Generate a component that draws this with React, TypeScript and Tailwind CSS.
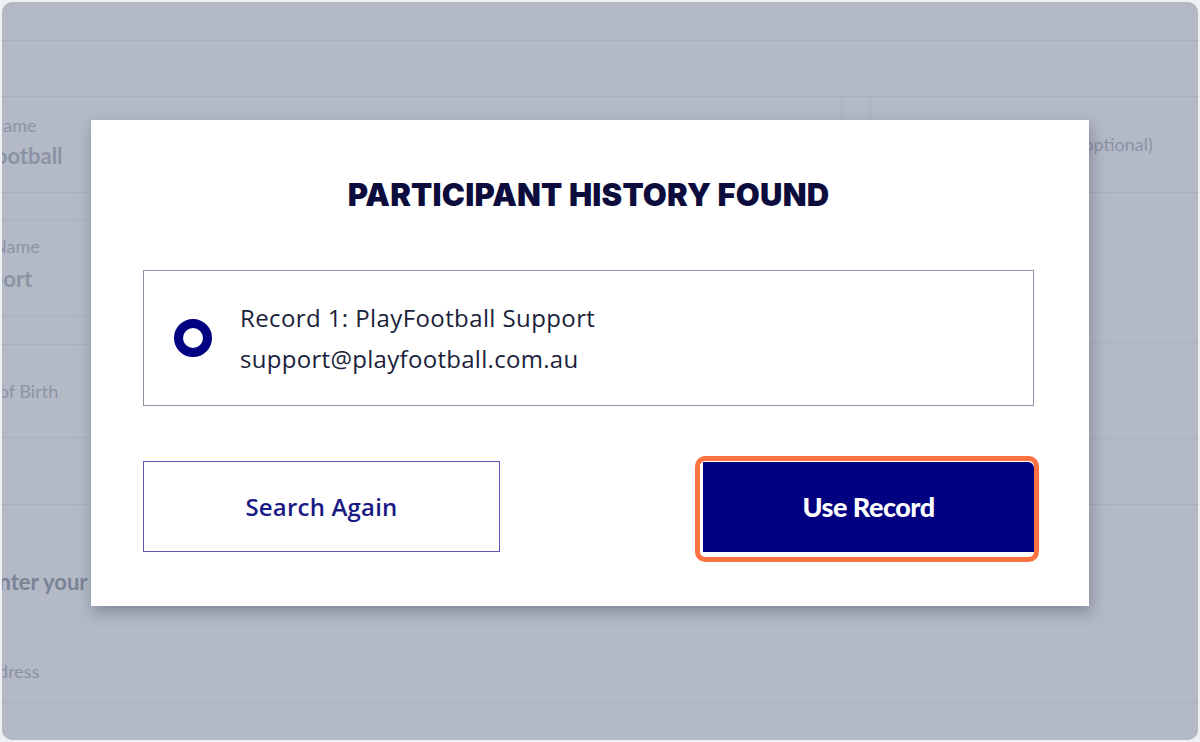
import React from 'react';

/**
 * Background form (dimmed behind the modal)
 */
function BackgroundForm() {
    return (
        <div className="flex flex-col text-[#8c93a5]">
            {/* Header strip */}
            <div className="h-[39px] border-b border-[#a9afbc]" />
            <div className="h-[56px] border-b border-[#a9afbc]" />

            <div className="flex">
                {/* Left column */}
                <div className="w-[892px] shrink-0 flex flex-col -ml-[52px]">
                    <div className="h-[96px] border-b border-r border-[#a9afbc] pt-[16px]">
                        <div className="text-[18px] leading-[24px]">First Name</div>
                        <div className="text-[22px] leading-[30px] font-bold mt-[4px] -ml-[8px]">PlayFootball</div>
                    </div>
                    <div className="h-[27px] border-b border-[#a9afbc]" />
                    <div className="h-[97px] border-b border-r border-[#a9afbc] pt-[14px]">
                        <div className="text-[18px] leading-[24px] pl-[6px]">Last Name</div>
                        <div className="text-[22px] leading-[30px] font-bold mt-[6px] pl-[4px]">Support</div>
                    </div>
                    <div className="h-[28px] border-b border-[#a9afbc]" />
                    <div className="h-[93px] border-b border-r border-[#a9afbc] flex items-center pl-[6px]">
                        <div className="text-[18px]">Date of Birth</div>
                    </div>
                </div>
                <div className="w-[28px] shrink-0" />
                {/* Right column */}
                <div className="flex-1 flex flex-col">
                    <div className="h-[96px] border-b border-l border-[#a9afbc] flex items-center pl-[78px]">
                        <div className="text-[18px] whitespace-nowrap">Preferred Name (optional)</div>
                    </div>
                    <div className="h-[150px] border-b border-[#a9afbc]" />
                    <div className="h-[96px] border-b border-[#a9afbc]" />
                </div>
            </div>

            <div className="h-[66px] border-b border-[#a9afbc]" />
            <div className="h-[197px] flex flex-col">
                <div className="text-[22px] font-bold text-[#7c8397] mt-[60px] -ml-[16px]">Enter your details</div>
                <div className="text-[18px] mt-[60px] -ml-[26px]">Address</div>
            </div>
            <div className="border-b border-[#a9afbc]" />
        </div>
    );
}

export default function App() {
    return (
        <div className="w-[1200px] h-[742px] bg-[#eef0f3] p-[2px]" style={{ fontFamily: 'Lato, "Open Sans", sans-serif' }}>
            <div className="relative w-[1196px] h-[738px] rounded-[10px] bg-[#b3b9c5] overflow-hidden">
                <BackgroundForm />

                {/* Modal */}
                <div className="absolute left-[89px] top-[118px] w-[998px] h-[486px] bg-white shadow-[2px_6px_14px_rgba(40,46,70,0.35)] pl-[52px] pr-[55px] flex flex-col">
                    <h2
                        className="pt-[57px] text-center text-[31px] leading-[36px] font-black tracking-[0.2px] text-[#0d0d3d]"
                        style={{ fontFamily: 'Inter, Lato, sans-serif' }}
                    >
                        PARTICIPANT HISTORY FOUND
                    </h2>

                    {/* Record card */}
                    <div className="mt-[57px] h-[136px] border border-[#8e92a4] flex items-center pl-[30px]">
                        <div className="w-[38px] h-[38px] rounded-full border-[9px] border-[#000080] shrink-0" />
                        <div
                            className="ml-[28px] flex flex-col text-[#1b1f3b]"
                            style={{ fontFamily: '"Open Sans", Lato, sans-serif' }}
                        >
                            <div className="text-[24px] leading-[30px] font-medium tracking-[0.4px]">Record 1: PlayFootball Support</div>
                            <div className="text-[24px] leading-[30px] mt-[11px] tracking-[0.3px]">support@playfootball.com.au</div>
                        </div>
                    </div>

                    {/* Buttons */}
                    <div className="mt-[55px] flex items-start justify-between">
                        <button
                            className="w-[357px] h-[91px] border border-[#5b5bb5] bg-white text-[24px] font-semibold tracking-[0.2px] text-[#1a1a85]"
                            style={{ fontFamily: '"Open Sans", Lato, sans-serif' }}
                        >
                            Search Again
                        </button>
                        <div className="-mt-[5px] -mr-[5px] w-[344px] h-[106px] rounded-[10px] border-[5px] border-[#ff7343] pl-[3px] pt-[1px] pb-[5px]">
                            <button className="w-full h-full bg-[#000080] rounded-tr-[6px] text-[27px] font-black tracking-[-0.5px] text-white">
                                Use Record
                            </button>
                        </div>
                    </div>
                </div>
            </div>
        </div>
    );
}
